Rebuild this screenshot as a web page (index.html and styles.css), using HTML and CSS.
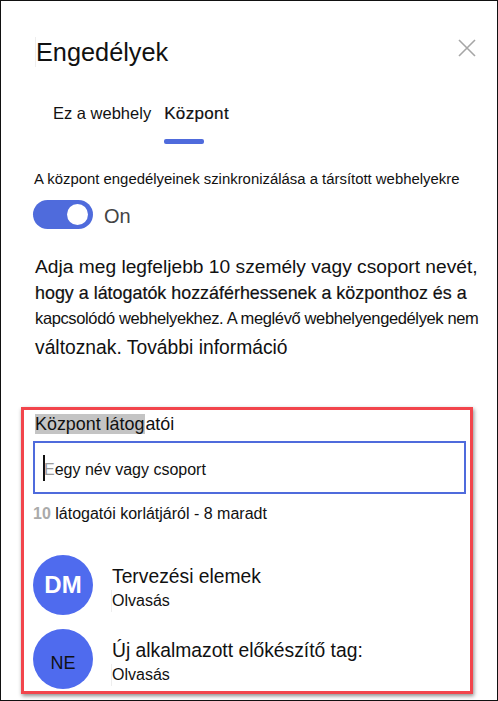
FILE: index.html
```html
<!DOCTYPE html>
<html lang="en">
<head>
    <meta charset="UTF-8">
    <meta name="viewport" content="width=device-width, initial-scale=1.0">
    <title>Engedélyek</title>
    <link rel="stylesheet" href="styles.css">
</head>
<body>

    <div class="panel">
        <div class="panel-header">
            <h1>Engedélyek</h1>
            <svg class="close" width="18" height="18" viewBox="0 0 18 18">
                <path d="M1 1L17 17M17 1L1 17" stroke="#a6a6a6" stroke-width="1.6" fill="none"/>
            </svg>
        </div>

        <div class="tabs">
            <div class="tab">Ez a webhely</div>
            <div class="tab active">Központ</div>
        </div>

        <div class="sync-label">A központ engedélyeinek szinkronizálása a társított webhelyekre</div>
        <div class="toggle-row">
            <div class="toggle"><span class="knob"></span></div>
            <span class="toggle-text">On</span>
        </div>

        <div class="intro">
            <div class="line-1">Adja meg legfeljebb 10 személy vagy csoport nevét,</div>
            <div class="line-2">hogy a látogatók hozzáférhessenek a központhoz és a</div>
            <div class="line-3">kapcsolódó webhelyekhez. A meglévő webhelyengedélyek nem</div>
            <div class="line-4">változnak. További információ</div>
        </div>

        <div class="visitors">
            <div class="visitors-title"><span class="highlight">Központ látog</span>atói</div>
            <div class="search"><span class="caret"></span><span class="ghost">E</span><span class="search-text">egy név vagy csoport</span></div>
            <div class="limit"><b>10</b> látogatói korlátjáról - 8 maradt</div>

            <div class="person first">
                <div class="avatar light">DM</div>
                <div class="person-info">
                    <div class="person-name">Tervezési elemek</div>
                    <div class="person-role">Olvasás</div>
                </div>
            </div>
            <div class="person">
                <div class="avatar dark">NE</div>
                <div class="person-info">
                    <div class="person-name">Új alkalmazott előkészítő tag:</div>
                    <div class="person-role">Olvasás</div>
                </div>
            </div>
        </div>
    </div>

</body>
</html>
```

FILE: styles.css
```css
html, body {
    margin: 0;
    padding: 0;
}

body {
    font-family: 'Liberation Sans', Arial, sans-serif;
    background-color: white;
    color: #111;
}

.panel {
    width: 498px;
    height: 701px;
    box-sizing: border-box;
    border: 1px solid #111;
    padding: 0 24px 0 20px;
    overflow: hidden;
}

.panel-header {
    display: flex;
    justify-content: space-between;
    align-items: flex-start;
    height: 90px;
    padding-left: 15px;
}

h1 {
    margin: 36px 0 0 -1px;
    border-left: 1px solid #eeeeee;
    font-size: 25.3px;
    font-weight: normal;
    line-height: 30px;
}

.close {
    margin: 38px -3px 0 0;
}

.tabs {
    display: flex;
    gap: 13px;
    height: 78px;
    padding-left: 32px;
}

.tab {
    font-size: 16.5px;
    line-height: 24px;
    margin-top: 10px;
}

.tab.active {
    position: relative;
    top: 1px;
    font-size: 17px;
    letter-spacing: 0.35px;
    -webkit-text-stroke: 0.2px #111;
}

.tab.active::after {
    content: "";
    display: block;
    width: 40px;
    height: 5px;
    margin-top: 13px;
    border-radius: 2px;
    background-color: #4f6bdc;
}

.sync-label {
    font-size: 14.9px;
    line-height: 20px;
    margin-left: 13px;
    white-space: nowrap;
}

.toggle-row {
    display: flex;
    align-items: center;
    gap: 11px;
    margin: 11px 0 0 12px;
}

.toggle {
    width: 60px;
    height: 29px;
    border-radius: 15px;
    background-color: #4f6bdc;
    position: relative;
}

.knob {
    position: absolute;
    right: 5px;
    top: 4px;
    width: 21px;
    height: 21px;
    border-radius: 50%;
    background-color: white;
}

.toggle-text {
    font-size: 20px;
    color: #444;
    padding-top: 3px;
}

.intro {
    margin: 25px 0 0 14px;
    white-space: nowrap;
}

.line-1 {
    font-size: 19.2px;
    line-height: 26px;
}

.line-2 {
    font-size: 17.9px;
    line-height: 26px;
    -webkit-text-stroke: 0.2px #111;
}

.line-3 {
    font-size: 16.5px;
    line-height: 24px;
    letter-spacing: -0.37px;
}

.line-4 {
    font-size: 19.3px;
    line-height: 36px;
}

.visitors {
    width: 452px;
    height: 287px;
    box-sizing: border-box;
    margin-top: 41px;
    border: 3px solid #f2454c;
    box-shadow: 1px 2px 4px rgba(0, 0, 0, 0.45);
    padding: 4px 4px 0 9px;
    overflow: hidden;
}

.visitors-title {
    font-size: 17.9px;
    line-height: 20px;
    margin-left: 2px;
}

.highlight {
    background-color: #c4c4c4;
    padding-right: 1px;
}

.search {
    height: 53px;
    box-sizing: border-box;
    margin-top: 7px;
    border: 2px solid #4f6bdc;
    display: flex;
    align-items: center;
    padding-left: 8px;
    font-size: 16px;
}

.search-text {
    padding-top: 4px;
}

.caret {
    width: 2px;
    height: 26px;
    background-color: #111;
}

.ghost {
    color: #999;
    margin-left: -1px;
    padding-top: 4px;
}

.limit {
    font-size: 16px;
    line-height: 20px;
    margin-top: 10px;
}

.limit b {
    color: #aaa;
}

.person {
    display: flex;
    align-items: center;
    gap: 19px;
    margin-top: 14px;
}

.person.first {
    margin-top: 31px;
}

.avatar {
    flex: none;
    width: 60px;
    height: 60px;
    border-radius: 50%;
    background-color: #4f6bee;
    display: flex;
    align-items: center;
    justify-content: center;
}

.avatar.light {
    color: white;
    font-size: 24px;
    font-weight: bold;
}

.avatar.dark {
    color: #111;
    font-size: 18px;
    padding-top: 8px;
    box-sizing: border-box;
}

.person-info {
    padding-top: 6px;
}

.person-name {
    font-size: 19.3px;
    line-height: 24px;
}

.person-role {
    font-size: 16px;
    line-height: 22px;
    margin: 1px 0 0 -1px;
    border-left: 1px solid #eeeeee;
}
```
